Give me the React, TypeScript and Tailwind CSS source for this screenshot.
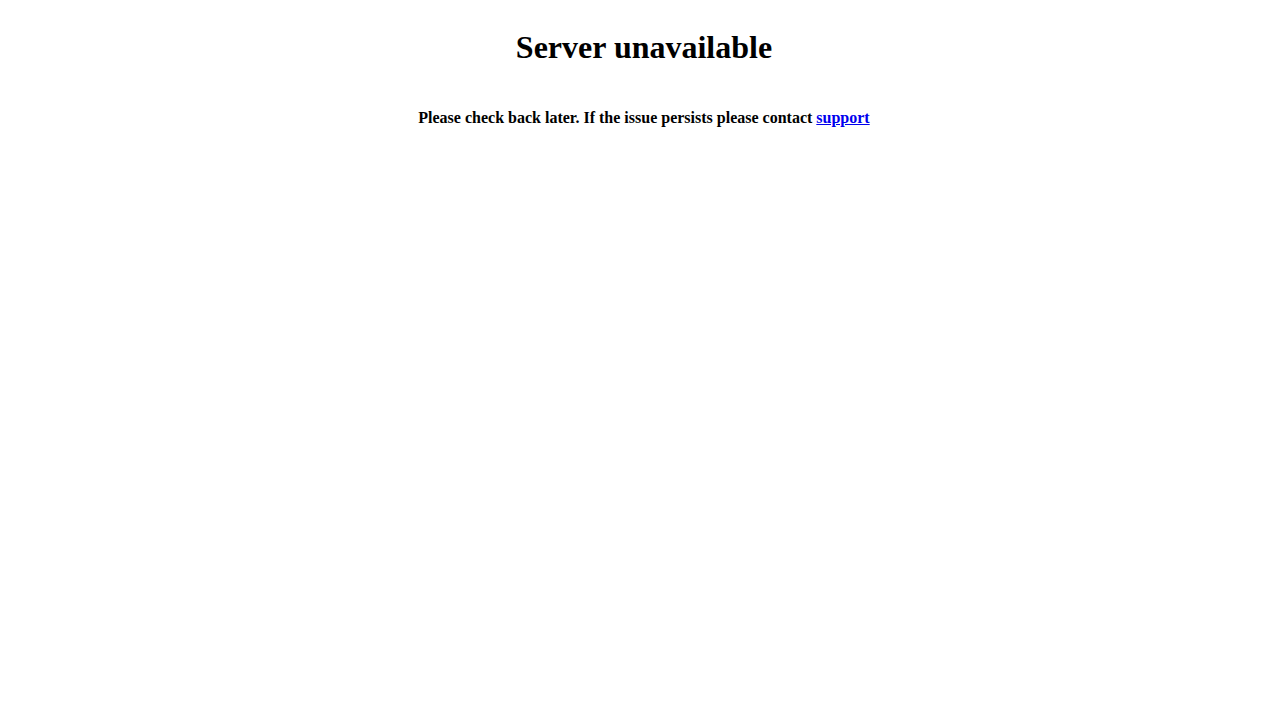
import React from "react";

export default function App() {
  return (
    <div
      className="min-h-[711px] w-full bg-white text-black pt-[29px] text-center"
      style={{ fontFamily: '"Liberation Serif", "Times New Roman", serif' }}
    >
      <h1 className="text-[32px] font-bold leading-[normal]">Server unavailable</h1>
      <p className="mt-[43px] text-[16px] font-bold leading-[normal]">
        Please check back later. If the issue persists please contact{" "}
        <a href="#" className="text-[#0000ee] underline">
          support
        </a>
      </p>
    </div>
  );
}
